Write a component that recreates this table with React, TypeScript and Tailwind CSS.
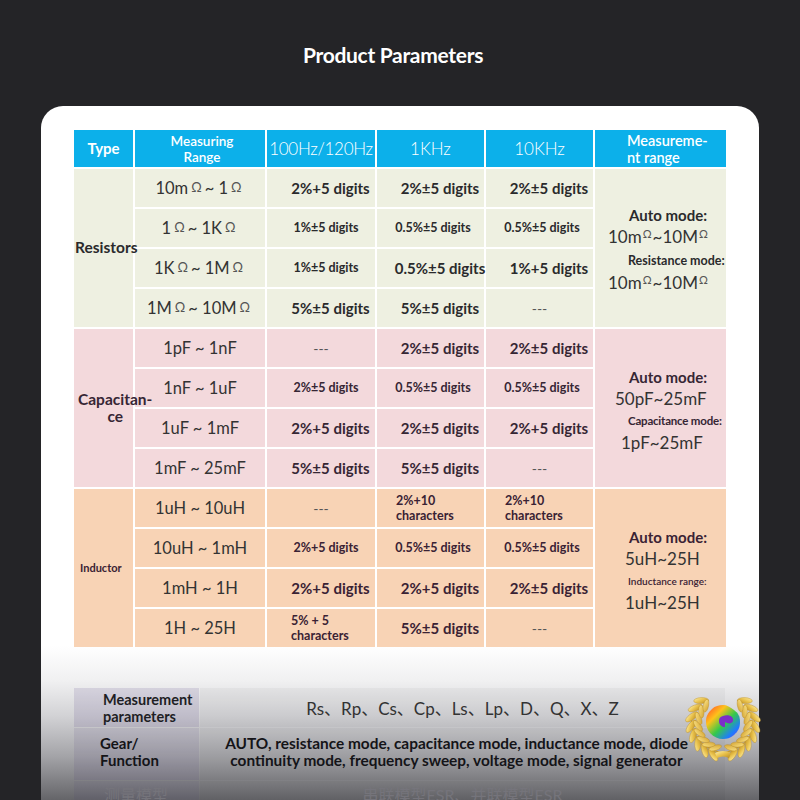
import React from 'react';

const O = ({ s = 'text-[13px] mx-[3px]' }: { s?: string }) => <span className={`${s} text-[#555]`}>Ω</span>;
const Os = () => <span className="text-[11px] relative -top-[5px] mx-[1px] text-[#555]">Ω</span>;

type Row = { r: React.ReactNode; a: string[] };
type Group = {
  bg: string;
  color: string;
  label: React.ReactNode;
  meas: React.ReactNode;
  rows: Row[];
};

const groups: Group[] = [
  {
    bg: 'bg-[#eef0e1]',
    color: 'text-[#2a2a2c]',
    label: (
      <div className="relative z-10 pl-[1px] text-[15.5px] font-bold whitespace-nowrap">Resistors</div>
    ),
    meas: (
      <div className="flex flex-col text-[#2a2a2c] pt-[4px]">
        <div className="ml-[34px] text-[15px] font-bold leading-[22px] whitespace-nowrap">Auto mode:</div>
        <div className="ml-[13px] text-[17px] leading-[22px] whitespace-nowrap text-[#333]">10m<Os />~10M<Os /></div>
        <div className="ml-[33px] text-[12.5px] font-bold leading-[22px] whitespace-nowrap">Resistance mode:</div>
        <div className="ml-[13px] text-[17px] leading-[22px] whitespace-nowrap text-[#333]">10m<Os />~10M<Os /></div>
      </div>
    ),
    rows: [
      { r: <>10m<O /> ~ 1<O /></>, a: ['L|2%+5 digits', 'L|2%±5 digits', 'L|2%±5 digits'] },
      { r: <>1<O /> ~ 1K<O /></>, a: ['S|1%±5 digits', 'S|0.5%±5 digits', 'S|0.5%±5 digits'] },
      { r: <>1K<O /> ~ 1M<O /></>, a: ['S|1%±5 digits', 'L|0.5%±5 digits', 'L|1%+5 digits'] },
      { r: <>1M<O /> ~ 10M<O /></>, a: ['L|5%±5 digits', 'L|5%±5 digits', 'D|---'] },
    ],
  },
  {
    bg: 'bg-[#f3d9dc]',
    color: 'text-[#362634]',
    label: (
      <div className="relative z-10 pl-[4px] text-[15.5px] font-bold whitespace-nowrap text-center leading-[17px]">
        Capacitan-
        <br />
        ce
      </div>
    ),
    meas: (
      <div className="flex flex-col text-[#362634] pt-[4px]">
        <div className="ml-[34px] text-[15px] font-bold leading-[22px] whitespace-nowrap">Auto mode:</div>
        <div className="ml-[20px] text-[17px] leading-[22px] whitespace-nowrap text-[#333]">50pF~25mF</div>
        <div className="ml-[33px] text-[11.5px] font-bold leading-[22px] whitespace-nowrap tracking-[-0.2px]">Capacitance mode:</div>
        <div className="ml-[26px] text-[17px] leading-[22px] whitespace-nowrap text-[#333]">1pF~25mF</div>
      </div>
    ),
    rows: [
      { r: <>1pF ~ 1nF</>, a: ['D|---', 'L|2%±5 digits', 'L|2%±5 digits'] },
      { r: <>1nF ~ 1uF</>, a: ['S|2%±5 digits', 'S|0.5%±5 digits', 'S|0.5%±5 digits'] },
      { r: <>1uF ~ 1mF</>, a: ['L|2%+5 digits', 'L|2%±5 digits', 'L|2%+5 digits'] },
      { r: <>1mF ~ 25mF</>, a: ['L|5%±5 digits', 'L|5%±5 digits', 'D|---'] },
    ],
  },
  {
    bg: 'bg-[#f8d3b5]',
    color: 'text-[#3a2234]',
    label: (
      <div className="relative z-10 pl-[6px] text-[11px] font-bold whitespace-nowrap">Inductor</div>
    ),
    meas: (
      <div className="flex flex-col text-[#3a2234] pt-[4px]">
        <div className="ml-[34px] text-[15px] font-bold leading-[22px] whitespace-nowrap">Auto mode:</div>
        <div className="ml-[30px] text-[17px] leading-[22px] whitespace-nowrap text-[#333]">5uH~25H</div>
        <div className="ml-[33px] text-[10px] font-semibold leading-[22px] whitespace-nowrap">Inductance range:</div>
        <div className="ml-[30px] text-[17px] leading-[22px] whitespace-nowrap text-[#333]">1uH~25H</div>
      </div>
    ),
    rows: [
      { r: <>1uH ~ 10uH</>, a: ['D|---', 'T|2%+10|characters', 'T|2%+10|characters'] },
      { r: <>10uH ~ 1mH</>, a: ['S|2%+5 digits', 'S|0.5%±5 digits', 'S|0.5%±5 digits'] },
      { r: <>1mH ~ 1H</>, a: ['L|2%+5 digits', 'L|2%+5 digits', 'L|2%±5 digits'] },
      { r: <>1H ~ 25H</>, a: ['T|5% + 5|characters', 'L|5%±5 digits', 'D|---'] },
    ],
  },
];

function Acc({ v, bg, color, col }: { v: string; bg: string; color: string; col: number }) {
  const parts = v.split('|');
  const k = parts[0];
  if (k === 'D')
    return <div className={`${bg} flex items-center justify-center text-[14px] text-[#555]`}>---</div>;
  if (k === 'T')
    return (
      <div className={`${bg} ${color} flex flex-col justify-center text-[12.5px] font-bold leading-[15px] ${col === 0 ? 'pl-[24px]' : 'pl-[19px]'}`}>
        <span>{parts[1]}</span>
        <span>{parts[2]}</span>
      </div>
    );
  if (k === 'S')
    return (
      <div className={`${bg} ${color} flex items-center justify-center text-[12.5px] font-bold whitespace-nowrap ${col === 0 ? 'pl-[10px]' : 'pl-[5px]'}`}>
        {parts[1]}
      </div>
    );
  return (
    <div className={`${bg} ${color} flex items-center justify-center text-[15px] font-bold whitespace-nowrap pl-[19px]`}>
      {parts[1]}
    </div>
  );
}

function Logo() {
  const leaves: React.ReactNode[] = [];
  const cx = 40;
  const cy = 33;
  const r = 28;
  for (let i = 0; i < 8; i++) {
    const deg = 108 + i * 17;
    const th = (deg * Math.PI) / 180;
    const x = cx + r * Math.cos(th);
    const y = cy + r * Math.sin(th);
    const tang = deg + 90;
    const ox = x + 4 * Math.cos(th);
    const oy = y + 4 * Math.sin(th);
    const ix = x - 3 * Math.cos(th);
    const iy = y - 3 * Math.sin(th);
    leaves.push(
      <ellipse key={`o${i}`} cx={ox} cy={oy} rx={7.5} ry={3}
        transform={`rotate(${tang + 40} ${ox} ${oy})`} fill="url(#gold)" stroke="#b88a24" strokeWidth="0.4" />,
    );
    leaves.push(
      <ellipse key={`i${i}`} cx={ix} cy={iy} rx={6.5} ry={2.6}
        transform={`rotate(${tang - 35} ${ix} ${iy})`} fill="url(#gold2)" stroke="#b88a24" strokeWidth="0.4" />,
    );
  }
  return (
    <svg width="80" height="72" viewBox="0 0 80 72">
      <defs>
        <linearGradient id="gold" x1="0" y1="0" x2="1" y2="1">
          <stop offset="0" stopColor="#fff1a8" />
          <stop offset="0.5" stopColor="#e8c04a" />
          <stop offset="1" stopColor="#b8891f" />
        </linearGradient>
        <linearGradient id="gold2" x1="0" y1="1" x2="1" y2="0">
          <stop offset="0" stopColor="#d3a12e" />
          <stop offset="1" stopColor="#fbe58a" />
        </linearGradient>
        <linearGradient id="rain" x1="0" y1="0" x2="1" y2="1">
          <stop offset="0" stopColor="#ff3d2e" />
          <stop offset="0.3" stopColor="#ffc21a" />
          <stop offset="0.55" stopColor="#35c94a" />
          <stop offset="0.8" stopColor="#1e7bff" />
          <stop offset="1" stopColor="#8a3bd8" />
        </linearGradient>
      </defs>
      <path d="M40 62 Q28 60 16 50 Q8 40 8 26" stroke="#c99a2b" strokeWidth="1.2" fill="none" />
      <path d="M40 62 Q52 60 64 50 Q72 40 72 26" stroke="#c99a2b" strokeWidth="1.2" fill="none" />
      <g>{leaves}</g>
      <g transform="translate(80,0) scale(-1,1)">{leaves}</g>
      <path d="M32 62 Q40 58 48 62 L46 67 Q40 64 34 67 Z" fill="url(#gold)" />
      <path
        d="M40 14 C44 14 47 16 51 19 C55 22 57 25 57 31 C57 37 55 40 51 44 C47 47 44 48 40 48 C35 48 31 46 27 42 C24 38 23 35 23 30 C23 25 25 22 29 18 C32 15 36 14 40 14 Z"
        fill="url(#rain)"
      />
      <path d="M40 25 C45 23 51 25 50 30 C49 33 45 33 42 31 L42 36 C39 36 36 34 36 30 C36 27 37 26 40 25 Z" fill="#7b2fc9" />
    </svg>
  );
}

export default function App() {
  return (
    <div className="relative w-[800px] h-[800px] overflow-hidden bg-[#242427] font-['Lato','Noto_Sans_CJK_SC',sans-serif]">
      <div className="h-[106px] pt-[4px] pr-[14px] flex items-center justify-center">
        <h1 className="text-white text-[21px] font-bold tracking-[-0.3px]">Product Parameters</h1>
      </div>
      <div className="mx-[41px] w-[718px] h-[720px] rounded-t-[22px] pt-[24px] px-[33px] bg-[linear-gradient(to_bottom,#ffffff_0px,#ffffff_540px,#f0f0f1_575px,#d2d2d5_610px,#a4a4a8_650px,#5c5c60_700px)]">
        <div className="grid grid-cols-[59px_130px_108px_107px_107px_131px] grid-rows-[37px_repeat(12,38px)] gap-[2px]">
          <div className="bg-[#0cb0ea] flex items-center justify-center text-white font-bold text-[15px]">Type</div>
          <div className="bg-[#0cb0ea] flex items-center justify-center text-white font-semibold text-[13.5px] leading-[16px] text-center pl-[4px]">
            Measuring
            <br />
            Range
          </div>
          <div className="bg-[#0cb0ea] flex items-center justify-center text-white font-light text-[17px] tracking-[-0.3px] whitespace-nowrap">100Hz/120Hz</div>
          <div className="bg-[#0cb0ea] flex items-center justify-center text-white font-light text-[17px]">1KHz</div>
          <div className="bg-[#0cb0ea] flex items-center justify-center text-white font-light text-[17px]">10KHz</div>
          <div className="bg-[#0cb0ea] flex flex-col justify-center text-white font-semibold text-[14.5px] leading-[17px] pl-[32px]">
            <span>Measureme-</span>
            <span>nt range</span>
          </div>
          {groups.map((g, gi) =>
            g.rows.map((row, ri) => (
              <React.Fragment key={`${gi}-${ri}`}>
                {ri === 0 && (
                  <div className={`${g.bg} ${g.color} row-span-4 flex items-center relative z-10`}>{g.label}</div>
                )}
                <div className={`${g.bg} flex items-center justify-center text-[16.5px] text-[#333] whitespace-nowrap`}>{row.r}</div>
                {row.a.map((v, ai) => (
                  <Acc key={ai} v={v} bg={g.bg} color={g.color} col={ai} />
                ))}
                {ri === 0 && <div className={`${g.bg} row-span-4 flex items-center`}>{g.meas}</div>}
              </React.Fragment>
            )),
          )}
        </div>

        <div className="mt-[41px] flex flex-col gap-[1px] w-[651px]">
          <div className="flex h-[39px] gap-[1px]">
            <div className="w-[125px] bg-[rgba(70,50,120,0.13)] flex flex-col justify-center pl-[29px] text-[14.5px] font-bold leading-[17px] text-[#1e1e24]">
              <span>Measurement</span>
              <span>parameters</span>
            </div>
            <div className="flex-1 bg-[rgba(0,0,0,0.03)] flex items-center justify-center text-[17px] text-[#333] pt-[2px]">
              Rs、Rp、Cs、Cp、Ls、Lp、D、Q、X、Z
            </div>
          </div>
          <div className="flex h-[52px] gap-[1px]">
            <div className="w-[125px] bg-[rgba(70,50,120,0.1)] flex flex-col justify-center pl-[26px] text-[15px] font-bold leading-[17px] text-[#141418] pb-[4px]">
              <span>Gear/</span>
              <span>Function</span>
            </div>
            <div className="flex-1 bg-[rgba(0,0,0,0.03)] flex flex-col items-center justify-center text-[15.4px] font-bold leading-[17px] text-[#141418] pr-[12px] pb-[4px] whitespace-nowrap">
              <span>AUTO, resistance mode, capacitance mode, inductance mode, diode</span>
              <span>continuity mode, frequency sweep, voltage mode, signal generator</span>
            </div>
          </div>
          <div className="flex h-[40px] gap-[1px]">
            <div className="w-[125px] bg-[rgba(70,50,120,0.08)] flex items-start pt-[2px] pl-[30px] text-[16px] text-[#75747b]">
              测量模型
            </div>
            <div className="flex-1 bg-[rgba(0,0,0,0.03)] flex items-start justify-center pt-[2px] text-[16px] text-[#75747b]">
              串联模型ESR、并联模型ESR
            </div>
          </div>
        </div>
      </div>
      <div className="absolute left-[683px] top-[691px]">
        <Logo />
      </div>
    </div>
  );
}
